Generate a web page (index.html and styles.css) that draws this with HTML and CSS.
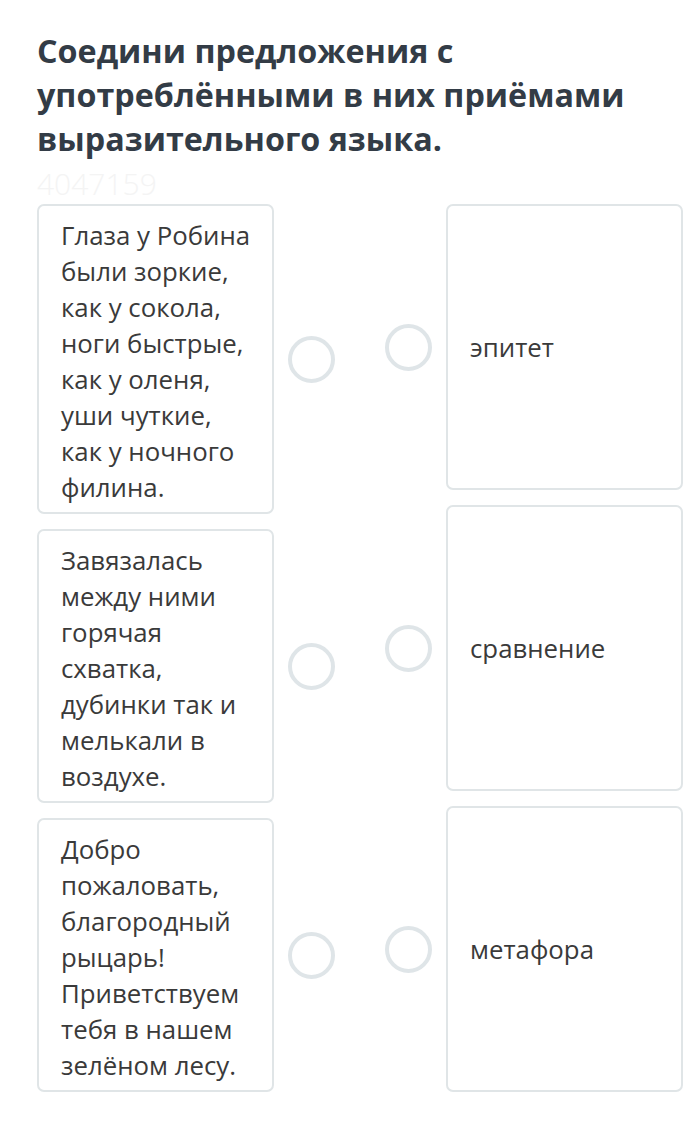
FILE: index.html
```html
<!DOCTYPE html>
<html lang="ru">
<head>
    <meta charset="UTF-8">
    <title>Соедини предложения</title>
    <link rel="stylesheet" href="styles.css">
</head>
<body>
<div class="page">
    <h1 class="title">Соедини предложения с употреблёнными в них приёмами выразительного языка.</h1>
    <div class="task-id">4047159</div>
    <div class="match">
        <div class="col-left">
            <div class="item-left">
                <div class="card card-text">Глаза у Робина были зоркие, как у сокола, ноги быстрые, как у оленя, уши чуткие, как у ночного филина.</div>
                <span class="dot"></span>
            </div>
            <div class="item-left">
                <div class="card card-text">Завязалась между ними горячая схватка, дубинки так и мелькали в воздухе.</div>
                <span class="dot"></span>
            </div>
            <div class="item-left">
                <div class="card card-text">Добро пожаловать, благородный рыцарь! Приветствуем тебя в нашем зелёном лесу.</div>
                <span class="dot"></span>
            </div>
        </div>
        <div class="col-right">
            <div class="item-right">
                <span class="dot"></span>
                <div class="card card-answer">эпитет</div>
            </div>
            <div class="item-right">
                <span class="dot"></span>
                <div class="card card-answer">сравнение</div>
            </div>
            <div class="item-right">
                <span class="dot"></span>
                <div class="card card-answer">метафора</div>
            </div>
        </div>
    </div>
</div>
</body>
</html>
```

FILE: styles.css
```css
html, body {
    margin: 0;
    padding: 0;
    background: #ffffff;
    font-family: "Open Sans", "Noto Sans", sans-serif;
}

.page {
    padding: 28px 15px 30px 37px;
}

.title {
    margin: 0;
    font-size: 32.3px;
    line-height: 44px;
    font-weight: 700;
    color: #333c46;
}

.task-id {
    font-size: 30px;
    line-height: 38px;
    font-weight: 300;
    color: #f4f4f4;
    margin-top: 5px;
}

.match {
    display: flex;
    gap: 50px;
    margin-top: 1px;
}

.col-left, .col-right {
    display: flex;
    flex-direction: column;
    gap: 15px;
}

.item-left, .item-right {
    display: flex;
    align-items: center;
    gap: 14px;
}

.card {
    box-sizing: border-box;
    flex: none;
    width: 237px;
    border: 2px solid #e0e5e7;
    border-radius: 7px;
    color: #3a3a3a;
    font-size: 25.8px;
    line-height: 36px;
}

.card-text {
    padding: 11px 17px 7px 22px;
}

.card-answer {
    height: 286px;
    display: flex;
    align-items: center;
    padding: 0 20px 0 22px;
}

.dot {
    box-sizing: border-box;
    flex: none;
    width: 47px;
    height: 47px;
    border: 4px solid #dfe5e8;
    border-radius: 50%;
}
```
